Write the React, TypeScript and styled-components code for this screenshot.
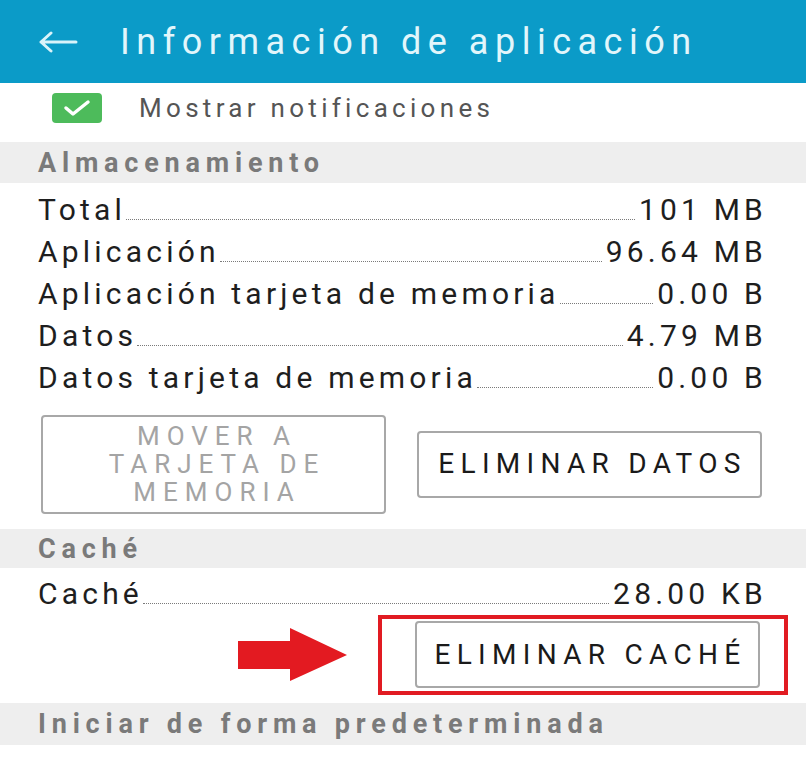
import React from 'react';
import styled, { createGlobalStyle } from 'styled-components';

const GlobalStyle = createGlobalStyle`
  html, body {
    margin: 0;
    padding: 0;
    background: #ffffff;
  }
  body {
    font-family: Roboto, "Liberation Sans", sans-serif;
  }
`;

const Screen = styled.div`
  width: 806px;
  height: 760px;
  overflow: hidden;
  background: #ffffff;
`;

const AppBar = styled.header`
  height: 83px;
  display: flex;
  align-items: center;
  padding-left: 38px;
  background: #0b9bc8;
`;

const BackButton = styled.button`
  display: flex;
  width: 40px;
  height: 22px;
  margin-right: 42px;
  padding: 0;
  border: 0;
  background: none;
`;

const Title = styled.h1`
  margin: 0;
  font-size: 36px;
  font-weight: 400;
  letter-spacing: 6.5px;
  color: #e2f6fb;
`;

const NotifRow = styled.div`
  height: 59px;
  display: flex;
  align-items: center;
  padding-left: 52px;
  padding-bottom: 10px;
  box-sizing: border-box;
`;

const CheckBox = styled.span`
  display: flex;
  align-items: center;
  justify-content: center;
  width: 50px;
  height: 30px;
  margin-right: 37px;
  border-radius: 4px;
  background: #4dbb5b;
`;

const NotifLabel = styled.span`
  font-size: 26px;
  letter-spacing: 4.3px;
  color: #555555;
`;

const SectionHeader = styled.div<{ $h: number }>`
  height: ${({ $h }) => $h}px;
  display: flex;
  align-items: center;
  padding-left: 38px;
  background: #eeeeee;
  font-size: 27px;
  font-weight: 700;
  letter-spacing: 5.8px;
  color: #7a7a7a;
`;

const List = styled.div<{ $top: number }>`
  padding: ${({ $top }) => $top}px 39px 0 38px;
`;

const InfoRow = styled.div`
  height: 42px;
  display: flex;
  align-items: baseline;
  font-size: 30px;
  letter-spacing: 4.2px;
  color: #1e1e1e;
  line-height: 42px;
`;

const Leader = styled.span`
  flex: 1;
  margin: 0 4px 0 0;
  border-bottom: 1px dotted #7a7a7a;
`;

const ButtonRow = styled.div`
  height: 130px;
  display: flex;
  align-items: center;
  gap: 31px;
  padding-left: 41px;
`;

const ActionButton = styled.button<{ $disabled?: boolean; $tall?: boolean }>`
  width: 345px;
  height: ${({ $tall }) => ($tall ? 99 : 67)}px;
  padding: 0 0 0 ${({ $tall }) => ($tall ? 7 : 6)}px;
  border: 2px solid #a8a8a8;
  border-radius: 4px;
  background: #ffffff;
  font-family: Roboto, "Liberation Sans", sans-serif;
  font-size: ${({ $tall }) => ($tall ? 26 : 28)}px;
  line-height: 28px;
  letter-spacing: ${({ $tall }) => ($tall ? 7 : 6.3)}px;
  color: ${({ $disabled }) => ($disabled ? '#a4a4a4' : '#1a1a1a')};
`;

const CacheAction = styled.div`
  display: flex;
  align-items: center;
  padding-left: 238px;
  margin-bottom: 8px;
`;

const Highlight = styled.div`
  margin-left: 31px;
  padding: 2px 24px 3px 33px;
  border: 4px solid #e11b22;
`;

const Arrow = () => (
  <svg width="109" height="54" viewBox="0 0 109 54">
    <path d="M0 13 H52 V0 L109 27 L52 53 V41 H0 Z" fill="#e31a21" />
  </svg>
);

const rows = [
  { label: 'Total', value: '101 MB' },
  { label: 'Aplicación', value: '96.64 MB' },
  { label: 'Aplicación tarjeta de memoria', value: '0.00 B' },
  { label: 'Datos', value: '4.79 MB' },
  { label: 'Datos tarjeta de memoria', value: '0.00 B' },
];

export default function App() {
  return (
    <Screen>
      <GlobalStyle />
      <AppBar>
        <BackButton aria-label="Atrás">
          <svg width="40" height="22" viewBox="0 0 40 22" fill="none" stroke="#d9f3fa" strokeWidth="3" strokeLinecap="round" strokeLinejoin="round">
            <path d="M3 11 H38 M13 2 L3 11 L13 20" />
          </svg>
        </BackButton>
        <Title>Información de aplicación</Title>
      </AppBar>

      <NotifRow>
        <CheckBox>
          <svg width="28" height="18" viewBox="0 0 28 18" fill="none" stroke="#ffffff" strokeWidth="3.5" strokeLinecap="round" strokeLinejoin="round">
            <path d="M3 9 L10 15 L25 3" />
          </svg>
        </CheckBox>
        <NotifLabel>Mostrar notificaciones</NotifLabel>
      </NotifRow>

      <SectionHeader $h={41}>Almacenamiento</SectionHeader>
      <List $top={6}>
        {rows.map((r) => (
          <InfoRow key={r.label}>
            <span>{r.label}</span>
            <Leader />
            <span>{r.value}</span>
          </InfoRow>
        ))}
      </List>

      <ButtonRow>
        <ActionButton $disabled $tall>
          MOVER A<br />TARJETA DE<br />MEMORIA
        </ActionButton>
        <ActionButton>ELIMINAR DATOS</ActionButton>
      </ButtonRow>

      <SectionHeader $h={39}>Caché</SectionHeader>
      <List $top={5}>
        <InfoRow>
          <span>Caché</span>
          <Leader />
          <span>28.00 KB</span>
        </InfoRow>
      </List>

      <CacheAction>
        <Arrow />
        <Highlight>
          <ActionButton>ELIMINAR CACHÉ</ActionButton>
        </Highlight>
      </CacheAction>

      <SectionHeader $h={42}>Iniciar de forma predeterminada</SectionHeader>
    </Screen>
  );
}
